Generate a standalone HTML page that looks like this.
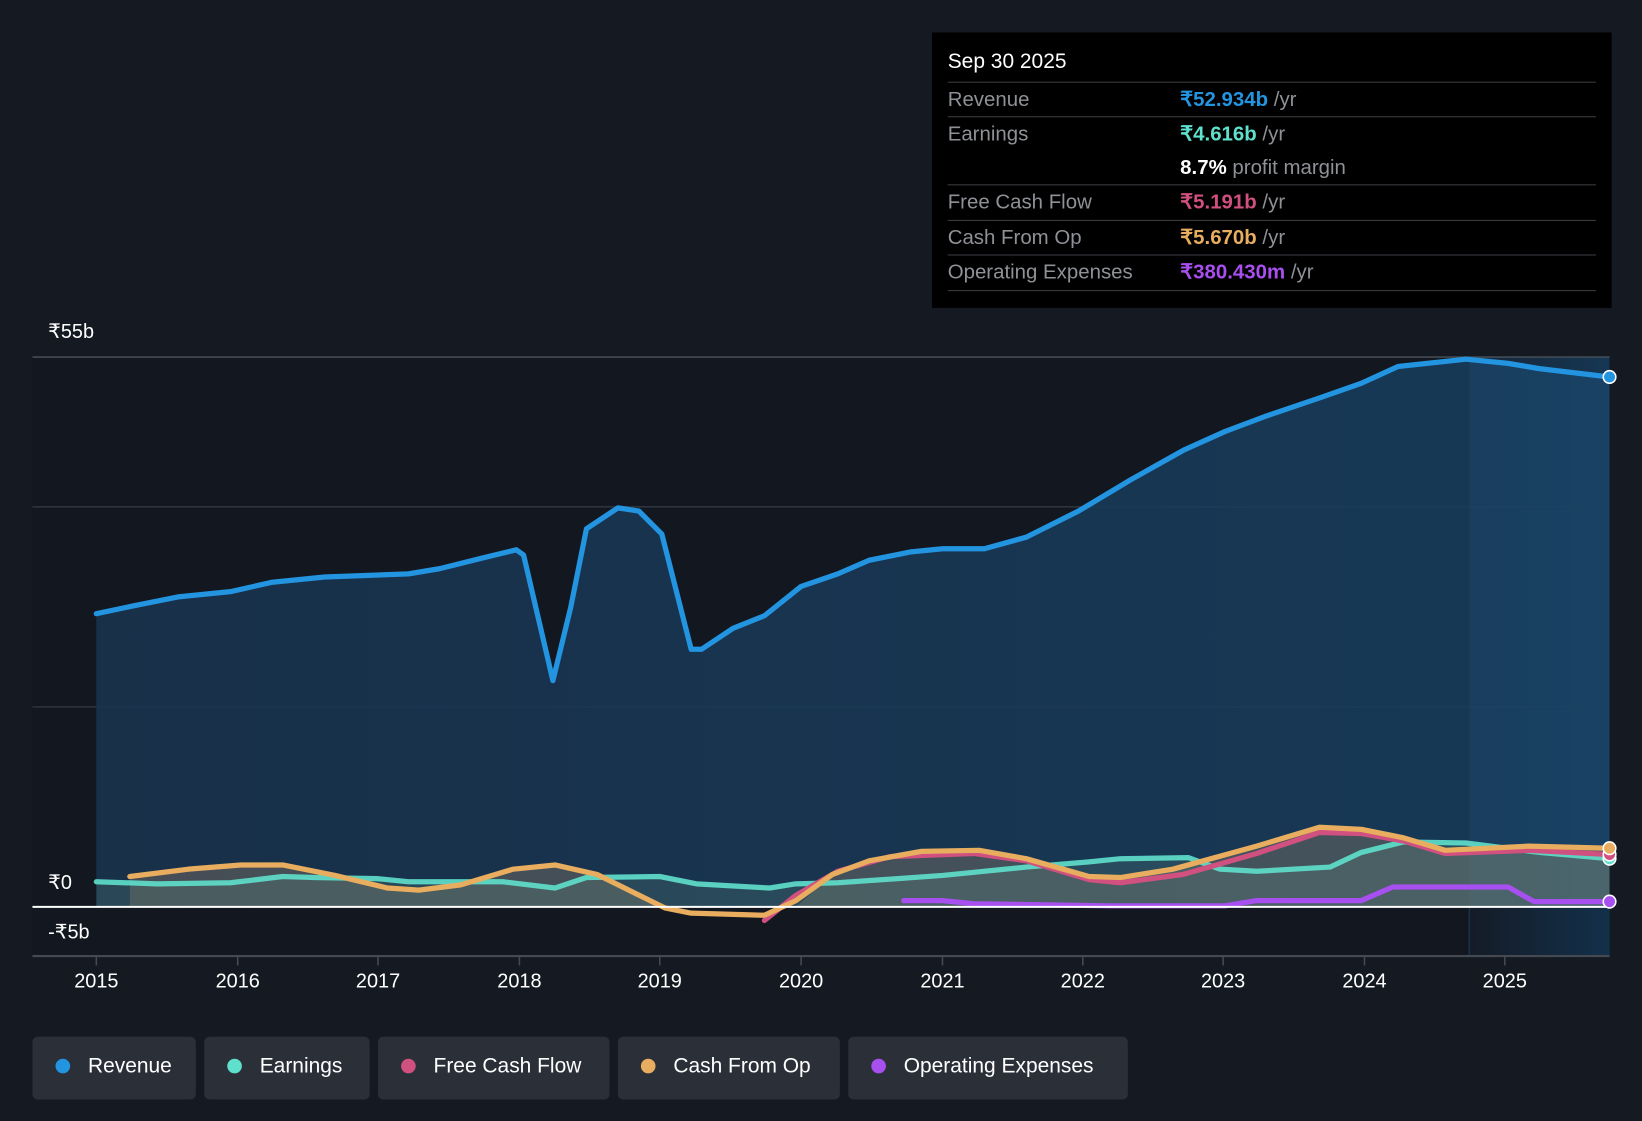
<!DOCTYPE html>
<html><head><meta charset="utf-8"><style>
html,body{margin:0;padding:0;background:#151a22;width:1642px;height:1120px;overflow:hidden}
#w{position:absolute;left:0;top:0;width:1568px;height:1070px;transform:scale(1.04719);transform-origin:0 0;font-family:"Liberation Sans",sans-serif;color:#fff}
.t{position:absolute}
.tip{position:absolute;left:890px;top:31px;width:649px;height:263px;background:#000}
.row{position:absolute;left:15px;width:619px;border-top:1.5px solid #3a3d42;font-size:19.5px;color:#8e9196;height:32px;line-height:32px}
.row .v{position:absolute;left:222px;top:0}
.leg{position:absolute;top:990px;height:60px;background:#2b2f38;border-radius:5px;font-size:20px;line-height:56px}
.leg i{position:absolute;left:22px;top:21px;width:14px;height:14px;border-radius:50%}
.leg span{position:absolute;left:53px}
.yr{position:absolute;top:927px;font-size:19px;width:60px;text-align:center;margin-left:-30px}
</style></head><body><div id="w">
<svg width="1568" height="1070" style="position:absolute;left:0;top:0">
<defs>
<linearGradient id="rf" x1="0" y1="0" x2="1" y2="0"><stop offset="0" stop-color="#1a3450"/><stop offset="1" stop-color="#173f60"/></linearGradient>
<linearGradient id="hl" x1="0" y1="0" x2="1" y2="0"><stop offset="0" stop-color="#141c27"/><stop offset="1" stop-color="#13304a"/></linearGradient>
</defs>
<rect x="31" y="341" width="1372" height="572" fill="#121720"/>
<rect x="1403" y="341" width="134" height="572" fill="url(#hl)"/>
<line x1="31" y1="341" x2="1537" y2="341" stroke="#454a52" stroke-width="1.5"/>
<line x1="31" y1="484" x2="1537" y2="484" stroke="#2e343d" stroke-width="1.5"/>
<line x1="31" y1="675" x2="1537" y2="675" stroke="#2e343d" stroke-width="1.5"/>
<path d="M92,586 L130,578 170,570 220,565 260,556 310,551 390,548 420,543 460,533 493,525 500,530 528,650 545,580 560,505 590,485 610,488 632,510 660,620 670,620 700,600 730,588 765,560 800,548 830,535 870,527 900,524 940,524 980,513 1030,488 1080,458 1130,430 1170,412 1210,397 1260,380 1300,366 1335,350 1400,343 1440,347 1470,352 1537,360 L1537,866 L92,866Z" fill="url(#rf)" opacity="0.85"/>
<rect x="1403" y="341" width="134" height="525" fill="#2a6090" opacity="0.15"/>
<line x1="1403" y1="341" x2="1403" y2="913" stroke="#1e3a55" stroke-width="1"/>
<path d="M124,837 L180,830 230,826 270,826 320,836 370,848 400,850 440,845 490,830 530,826 570,835 635,866 L124,866Z M760,866 L795,835 830,822 880,813 935,812 980,820 1040,837 1070,838 1120,830 1200,808 1260,790 1300,792 1340,800 1380,812 1460,808 1537,810 L1537,866Z" fill="#8a7a6a" opacity="0.4"/>
<path d="M92,842 L150,844 220,843 270,837 300,838 360,839 390,842 480,842 530,848 560,838 630,837 665,844 735,848 760,844 800,843 900,836 980,828 1040,823 1070,820 1135,819 1165,830 1200,832 1270,828 1300,814 1340,804 1400,805 1470,814 1537,820 L1537,866 L92,866Z" fill="#5a8a80" opacity="0.25"/>
<g fill="none" stroke-width="5" stroke-linejoin="round" stroke-linecap="round">
<path d="M92,586 L130,578 170,570 220,565 260,556 310,551 390,548 420,543 460,533 493,525 500,530 528,650 545,580 560,505 590,485 610,488 632,510 660,620 670,620 700,600 730,588 765,560 800,548 830,535 870,527 900,524 940,524 980,513 1030,488 1080,458 1130,430 1170,412 1210,397 1260,380 1300,366 1335,350 1400,343 1440,347 1470,352 1537,360" stroke="#2394e0"/>
<path d="M92,842 L150,844 220,843 270,837 300,838 360,839 390,842 480,842 530,848 560,838 630,837 665,844 735,848 760,844 800,843 900,836 980,828 1040,823 1070,820 1135,819 1165,830 1200,832 1270,828 1300,814 1340,804 1400,805 1470,814 1537,820" stroke="#5fe0cc" opacity="0.9"/>
<path d="M730,879 L760,855 800,832 850,818 930,815 980,822 1040,840 1070,843 1130,835 1200,815 1260,795 1300,796 1340,803 1380,815 1460,812 1537,816" stroke="#d0507f"/>
<path d="M124,837 L180,830 230,826 270,826 320,836 370,848 400,850 440,845 490,830 530,826 570,835 635,867 660,872 730,874 760,860 795,835 830,822 880,813 935,812 980,820 1040,837 1070,838 1120,830 1200,808 1260,790 1300,792 1340,800 1380,812 1460,808 1537,810" stroke="#e8ad5e"/>
<path d="M863,860 L900,860 930,863 1060,865 1170,865 1200,860 1300,860 1330,847 1440,847 1465,861 1537,861" stroke="#a84ff0"/>
</g>
<line x1="31" y1="866" x2="1537" y2="866" stroke="#fff" stroke-width="2"/>
<line x1="31" y1="913" x2="1537" y2="913" stroke="#454a52" stroke-width="2"/>
<g stroke="#454a52" stroke-width="1.5">
<line x1="92" y1="913" x2="92" y2="922"/><line x1="227" y1="913" x2="227" y2="922"/><line x1="361" y1="913" x2="361" y2="922"/><line x1="496" y1="913" x2="496" y2="922"/><line x1="630" y1="913" x2="630" y2="922"/><line x1="765" y1="913" x2="765" y2="922"/><line x1="900" y1="913" x2="900" y2="922"/><line x1="1034" y1="913" x2="1034" y2="922"/><line x1="1168" y1="913" x2="1168" y2="922"/><line x1="1303" y1="913" x2="1303" y2="922"/><line x1="1437" y1="913" x2="1437" y2="922"/>
</g>
<g stroke="#fff" stroke-width="1.5">
<circle cx="1537" cy="360" r="6" fill="#2394e0"/>
<circle cx="1537" cy="820" r="6" fill="#5fe0cc"/>
<circle cx="1537" cy="816" r="6" fill="#d0507f"/>
<circle cx="1537" cy="810" r="6" fill="#e8ad5e"/>
<circle cx="1537" cy="861" r="6" fill="#a84ff0"/>
</g>
</svg>
<div class="t" style="left:46px;top:306px;font-size:19px">₹55b</div>
<div class="t" style="left:46px;top:832px;font-size:19px">₹0</div>
<div class="t" style="left:46px;top:879px;font-size:19px">-₹5b</div>
<div class="yr" style="left:92px">2015</div><div class="yr" style="left:227px">2016</div><div class="yr" style="left:361px">2017</div><div class="yr" style="left:496px">2018</div><div class="yr" style="left:630px">2019</div><div class="yr" style="left:765px">2020</div><div class="yr" style="left:900px">2021</div><div class="yr" style="left:1034px">2022</div><div class="yr" style="left:1168px">2023</div><div class="yr" style="left:1303px">2024</div><div class="yr" style="left:1437px">2025</div>
<div class="tip">
<div class="t" style="left:15px;top:17px;font-size:20px;color:#fff">Sep 30 2025</div>
<div class="row" style="top:47px">Revenue<span class="v"><b style="color:#2394e0">₹52.934b</b> /yr</span></div>
<div class="row" style="top:80px;height:64px">Earnings<span class="v"><b style="color:#5fe0cc">₹4.616b</b> /yr</span><span class="v" style="top:32px"><b style="color:#fff">8.7%</b> profit margin</span></div>
<div class="row" style="top:145px">Free Cash Flow<span class="v"><b style="color:#d0507f">₹5.191b</b> /yr</span></div>
<div class="row" style="top:179px">Cash From Op<span class="v"><b style="color:#e8ad5e">₹5.670b</b> /yr</span></div>
<div class="row" style="top:212px">Operating Expenses<span class="v"><b style="color:#a84ff0">₹380.430m</b> /yr</span></div>
<div class="row" style="top:246px;height:0"></div>
</div>
<div class="leg" style="left:31px;width:156px"><i style="background:#2394e0"></i><span>Revenue</span></div>
<div class="leg" style="left:195px;width:158px"><i style="background:#5fe0cc"></i><span>Earnings</span></div>
<div class="leg" style="left:361px;width:221px"><i style="background:#d0507f"></i><span>Free Cash Flow</span></div>
<div class="leg" style="left:590px;width:212px"><i style="background:#e8ad5e"></i><span>Cash From Op</span></div>
<div class="leg" style="left:810px;width:267px"><i style="background:#a84ff0"></i><span>Operating Expenses</span></div>
</div></body></html>
